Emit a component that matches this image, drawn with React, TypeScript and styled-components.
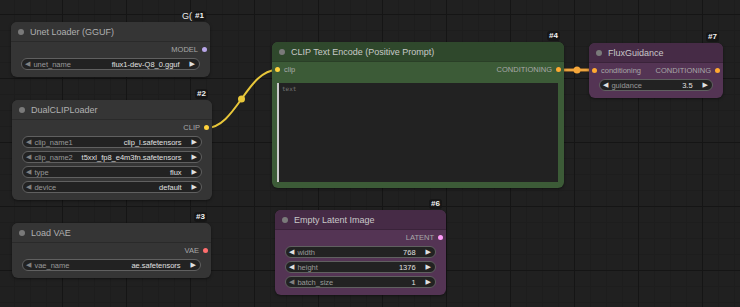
import styled, { createGlobalStyle } from 'styled-components';

type Tone = 'gray' | 'green' | 'purple';

const tones: Record<Tone, { title: string; body: string; border: string }> = {
	gray: { title: '#353535', body: '#353535', border: '#2a2a2a' },
	green: { title: '#2f482c', body: '#3c5b37', border: '#2a3f27' },
	purple: { title: '#462b46', body: '#543454', border: '#3a233a' },
};

const GlobalStyle = createGlobalStyle`
	html, body {
		margin: 0;
		padding: 0;
		background: #202020;
	}
	body {
		font-family: "Liberation Sans", Arial, sans-serif;
	}
`;

const Canvas = styled.div`
	position: relative;
	width: 740px;
	height: 307px;
	overflow: hidden;
	background-color: #202020;
	background-image:
		linear-gradient(to right, #151515 1px, transparent 1px),
		linear-gradient(to bottom, #151515 1px, transparent 1px),
		linear-gradient(to right, #1d1d1d 1px, transparent 1px),
		linear-gradient(to bottom, #1d1d1d 1px, transparent 1px);
	background-size: 64px 64px, 64px 64px, 16px 16px, 16px 16px;
	background-position: 62px 14px, 62px 14px, 62px 14px, 62px 14px;
`;

const Links = styled.svg`
	position: absolute;
	inset: 0;
	pointer-events: none;
`;

const NodeBox = styled.div<{ $x: number; $y: number; $w: number; $tone: Tone }>`
	position: absolute;
	left: ${(p) => p.$x}px;
	top: ${(p) => p.$y}px;
	width: ${(p) => p.$w}px;
	display: flex;
	flex-direction: column;
	border-radius: 6px;
	background: ${(p) => tones[p.$tone].body};
	box-shadow: 0 1px 3px rgba(0, 0, 0, 0.45);
`;

const TitleBar = styled.div<{ $tone: Tone }>`
	height: 20px;
	display: flex;
	align-items: center;
	gap: 6px;
	padding-left: 7px;
	border-radius: 6px 6px 0 0;
	background: ${(p) => tones[p.$tone].title};
	border-bottom: 1px solid ${(p) => tones[p.$tone].border};
	box-sizing: border-box;
	color: ${(p) => (p.$tone === 'gray' ? '#b0b0b0' : '#c8c8c8')};
	font-size: 9px;
	white-space: nowrap;
`;

const TitleDot = styled.span`
	width: 6px;
	height: 6px;
	border-radius: 50%;
	background: #7a7a7a;
`;

const Badge = styled.div<{ $right?: number }>`
	position: absolute;
	bottom: 100%;
	right: ${(p) => p.$right ?? 4}px;
	margin-bottom: 1px;
	display: flex;
	align-items: center;
	gap: 1px;
	font-size: 8px;
	font-weight: bold;
	color: #f2f2f2;
	line-height: 10px;
`;

const BadgeTag = styled.span`
	background: #161616;
	padding: 0 2px;
	border-radius: 3px;
`;

const Overflow = styled.span`
	font-size: 9px;
	font-weight: normal;
	color: #eaeaea;
	white-space: nowrap;
`;

const SlotRow = styled.div`
	height: 15px;
	display: flex;
	align-items: center;
	justify-content: space-between;
	padding: 0 3px;
	font-size: 7.5px;
	color: #a8a8a8;
`;

const Slot = styled.div<{ $side: 'in' | 'out' }>`
	display: flex;
	align-items: center;
	gap: 4px;
	flex-direction: ${(p) => (p.$side === 'in' ? 'row' : 'row-reverse')};
	margin-left: ${(p) => (p.$side === 'out' ? 'auto' : '0')};
`;

const Dot = styled.span<{ $color: string }>`
	width: 5px;
	height: 5px;
	border-radius: 50%;
	background: ${(p) => p.$color};
`;

const Widgets = styled.div`
	display: flex;
	flex-direction: column;
	gap: 3px;
	padding: 1px 10px 7px 10px;
`;

const WidgetRow = styled.div`
	height: 12px;
	display: flex;
	align-items: center;
	padding: 0 4px 0 3px;
	border: 1px solid #606060;
	border-radius: 7px;
	background: #222;
	box-sizing: border-box;
	font-size: 7.5px;
`;

const Arrow = styled.span<{ $bright?: boolean }>`
	font-family: "DejaVu Sans", sans-serif;
	font-size: 7px;
	color: ${(p) => (p.$bright ? '#e0e0e0' : '#808080')};
	line-height: 1;
`;

const WLabel = styled.span`
	margin-left: 3px;
	color: #999;
	white-space: nowrap;
`;

const WValue = styled.span`
	margin-left: auto;
	margin-right: 10px;
	color: #e0e0e0;
	white-space: nowrap;
`;

const TextArea = styled.div`
	margin: 6px 6px 6px 5px;
	height: 99px;
	background: #222;
	border-left: 2px solid #c9c9c9;
	box-sizing: border-box;
	padding: 2px 3px;
	font-family: "DejaVu Sans Mono", monospace;
	font-size: 6px;
	color: #777;
`;

type WidgetProps = { label: string; value: string; bright?: boolean };

const Widget = ({ label, value, bright }: WidgetProps) => (
	<WidgetRow>
		<Arrow $bright={bright}>◀</Arrow>
		<WLabel>{label}</WLabel>
		<WValue>{value}</WValue>
		<Arrow $bright>▶</Arrow>
	</WidgetRow>
);

const App = () => {
	return (
		<>
			<GlobalStyle />
			<Canvas>
				<Links width="740" height="307">
					<path d="M206 128 C 236 128, 247 70, 277 70" stroke="#e8c73a" strokeWidth="2" fill="none" />
					<circle cx="241.5" cy="99" r="3.5" fill="#e8c73a" />
					<path d="M559 70 L 594 70" stroke="#d98d2a" strokeWidth="3" fill="none" />
					<path d="M559 70 L 594 70" stroke="#ffbb55" strokeWidth="1" fill="none" />
					<circle cx="577" cy="70" r="3.5" fill="#f5a63a" />
				</Links>

				<NodeBox $x={11} $y={22} $w={199} $tone="gray">
					<Badge>
						<Overflow>G(</Overflow>
						<BadgeTag>#1</BadgeTag>
					</Badge>
					<TitleBar $tone="gray">
						<TitleDot />
						Unet Loader (GGUF)
					</TitleBar>
					<SlotRow>
						<Slot $side="out">
							<Dot $color="#b8a6e8" />
							MODEL
						</Slot>
					</SlotRow>
					<Widgets>
						<Widget label="unet_name" value="flux1-dev-Q8_0.gguf" />
					</Widgets>
				</NodeBox>

				<NodeBox $x={12} $y={100} $w={200} $tone="gray">
					<Badge>
						<BadgeTag>#2</BadgeTag>
					</Badge>
					<TitleBar $tone="gray">
						<TitleDot />
						DualCLIPLoader
					</TitleBar>
					<SlotRow>
						<Slot $side="out">
							<Dot $color="#ffd23c" />
							CLIP
						</Slot>
					</SlotRow>
					<Widgets>
						<Widget label="clip_name1" value="clip_l.safetensors" />
						<Widget label="clip_name2" value="t5xxl_fp8_e4m3fn.safetensors" />
						<Widget label="type" value="flux" />
						<Widget label="device" value="default" />
					</Widgets>
				</NodeBox>

				<NodeBox $x={12} $y={223} $w={199} $tone="gray">
					<Badge>
						<BadgeTag>#3</BadgeTag>
					</Badge>
					<TitleBar $tone="gray">
						<TitleDot />
						Load VAE
					</TitleBar>
					<SlotRow>
						<Slot $side="out">
							<Dot $color="#ff6e6e" />
							VAE
						</Slot>
					</SlotRow>
					<Widgets>
						<Widget label="vae_name" value="ae.safetensors" />
					</Widgets>
				</NodeBox>

				<NodeBox $x={272} $y={42} $w={292} $tone="green">
					<Badge>
						<BadgeTag>#4</BadgeTag>
					</Badge>
					<TitleBar $tone="green">
						<TitleDot />
						CLIP Text Encode (Positive Prompt)
					</TitleBar>
					<SlotRow>
						<Slot $side="in">
							<Dot $color="#ffd23c" />
							clip
						</Slot>
						<Slot $side="out">
							<Dot $color="#ffa931" />
							CONDITIONING
						</Slot>
					</SlotRow>
					<TextArea>text</TextArea>
				</NodeBox>

				<NodeBox $x={275} $y={210} $w={171} $tone="purple">
					<Badge>
						<BadgeTag>#6</BadgeTag>
					</Badge>
					<TitleBar $tone="purple">
						<TitleDot />
						Empty Latent Image
					</TitleBar>
					<SlotRow>
						<Slot $side="out">
							<Dot $color="#ff9cf9" />
							LATENT
						</Slot>
					</SlotRow>
					<Widgets>
						<Widget label="width" value="768" bright />
						<Widget label="height" value="1376" bright />
						<Widget label="batch_size" value="1" />
					</Widgets>
				</NodeBox>

				<NodeBox $x={589} $y={43} $w={134} $tone="purple">
					<Badge>
						<BadgeTag>#7</BadgeTag>
					</Badge>
					<TitleBar $tone="purple">
						<TitleDot />
						FluxGuidance
					</TitleBar>
					<SlotRow>
						<Slot $side="in">
							<Dot $color="#ffa931" />
							conditioning
						</Slot>
						<Slot $side="out">
							<Dot $color="#ffa931" />
							CONDITIONING
						</Slot>
					</SlotRow>
					<Widgets>
						<Widget label="guidance" value="3.5" bright />
					</Widgets>
				</NodeBox>
			</Canvas>
		</>
	);
};

export default App;
